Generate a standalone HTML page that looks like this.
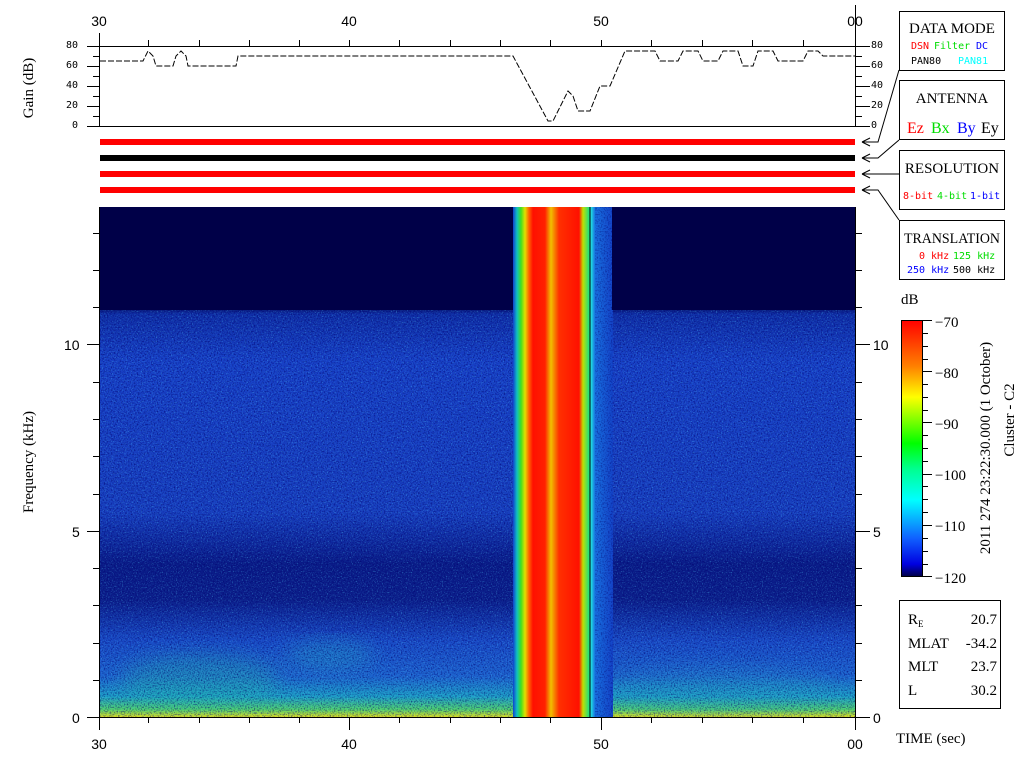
<!DOCTYPE html>
<html><head><meta charset="utf-8"><style>
html,body{margin:0;padding:0;background:#fff;width:1024px;height:768px;overflow:hidden}
svg{display:block}
.n{font-family:"Liberation Sans",sans-serif;font-size:14px;fill:#000}
.s{font-family:"DejaVu Sans Mono","Liberation Mono",monospace;font-size:10px}
.t{font-family:"Liberation Serif",serif;font-size:15px;fill:#000}
</style></head><body>
<svg width="1024" height="768" viewBox="0 0 1024 768" xmlns="http://www.w3.org/2000/svg">
<defs>
<linearGradient id="bg" x1="0" y1="207" x2="0" y2="717" gradientUnits="userSpaceOnUse">
<stop offset="0" stop-color="#000048"/>
<stop offset="0.19" stop-color="#000048"/>
<stop offset="0.21" stop-color="#1030a8"/>
<stop offset="0.3" stop-color="#1842c8"/>
<stop offset="0.6" stop-color="#1840c0"/>
<stop offset="0.7" stop-color="#0a1c88"/>
<stop offset="0.77" stop-color="#0c208c"/>
<stop offset="0.85" stop-color="#1a4cc8"/>
<stop offset="0.92" stop-color="#1e64d0"/>
<stop offset="0.96" stop-color="#1ea0c8"/>
<stop offset="0.985" stop-color="#50d070"/>
<stop offset="1" stop-color="#e0e020"/>
</linearGradient>
<linearGradient id="burst" x1="513" y1="0" x2="613" y2="0" gradientUnits="userSpaceOnUse">
<stop offset="0" stop-color="#1040d0"/>
<stop offset="0.04" stop-color="#10c0c0"/>
<stop offset="0.08" stop-color="#40e020"/>
<stop offset="0.12" stop-color="#e0e000"/>
<stop offset="0.16" stop-color="#ff6000"/>
<stop offset="0.2" stop-color="#ff1000"/>
<stop offset="0.32" stop-color="#ff2000"/>
<stop offset="0.38" stop-color="#f0c000"/>
<stop offset="0.46" stop-color="#ff3000"/>
<stop offset="0.66" stop-color="#ff1000"/>
<stop offset="0.7" stop-color="#c0e000"/>
<stop offset="0.76" stop-color="#20e080"/>
<stop offset="0.77" stop-color="#000"/>
<stop offset="0.78" stop-color="#20e0e0"/>
<stop offset="0.82" stop-color="#1870e0"/>
<stop offset="1" stop-color="#1444c8"/>
</linearGradient>
<linearGradient id="cb" x1="0" y1="320" x2="0" y2="577" gradientUnits="userSpaceOnUse">
<stop offset="0" stop-color="#ff0000"/>
<stop offset="0.18" stop-color="#ff8000"/>
<stop offset="0.3" stop-color="#ffff00"/>
<stop offset="0.48" stop-color="#00ff00"/>
<stop offset="0.58" stop-color="#00ff90"/>
<stop offset="0.7" stop-color="#00ffff"/>
<stop offset="0.85" stop-color="#1060ff"/>
<stop offset="0.95" stop-color="#0000e0"/>
<stop offset="1" stop-color="#000040"/>
</linearGradient>
<filter id="noise" x="0" y="0" width="100%" height="100%">
<feTurbulence type="fractalNoise" baseFrequency="0.7" numOctaves="1" seed="3"/>
<feColorMatrix type="matrix" values="0 0 0 0 0  0 0 0 0 0  0 0 0 0 0.15  0 0 0 -2.4 1.3"/>
</filter>
<filter id="noise2" x="0" y="0" width="100%" height="100%">
<feTurbulence type="fractalNoise" baseFrequency="0.8" numOctaves="1" seed="11"/>
<feColorMatrix type="matrix" values="0 0 0 0 0.1  0 0 0 0 0.7  0 0 0 0 1  0 0 0 2.6 -1.45"/>
</filter>
<filter id="blur"><feGaussianBlur stdDeviation="10"/></filter>
</defs>

<!-- spectrogram -->
<rect x="99" y="207" width="756" height="510" fill="url(#bg)"/>
<g filter="url(#blur)" opacity="0.35">
<ellipse cx="200" cy="680" rx="80" ry="25" fill="#20c0a0"/>
<ellipse cx="330" cy="655" rx="45" ry="15" fill="#20b0c0"/>
<ellipse cx="720" cy="690" rx="120" ry="20" fill="#20a0c0"/>
</g>
<rect x="99" y="310" width="756" height="407" filter="url(#noise)" opacity="0.75"/>
<rect x="99" y="310" width="756" height="407" filter="url(#noise2)" opacity="0.6"/>
<rect x="513" y="207" width="100" height="510" fill="url(#burst)"/>
<rect x="595" y="207" width="18" height="510" filter="url(#noise)" opacity="0.6"/>
<rect x="612" y="207" width="243" height="103" fill="#000048"/>
<rect x="99" y="207" width="414" height="103" fill="#000048"/>

<!-- gain plot -->
<g stroke="#000" fill="none" stroke-width="1">
<path d="M87 46.5H855.5 M99.5 33V126.5 M87 126.5H855.5 M855.5 5V126.5"/>
<path d="M87 46.5H99 M93 56.5H99 M87 66.5H99 M93 76.5H99 M87 86.5H99 M93 96.5H99 M87 106.5H99 M93 116.5H99 M87 126.5H99"/>
<path d="M855 46.5H870 M855 56.5H862 M855 66.5H870 M855 76.5H862 M855 86.5H870 M855 96.5H862 M855 106.5H870 M855 116.5H862 M855 126.5H870"/>
<path d="M148.5 40V46 M199.5 40V46 M249.5 40V46 M299.5 40V46 M349.5 40V46 M399.5 40V46 M450.5 40V46 M500.5 40V46 M550.5 40V46 M601.5 40V46 M651.5 40V46 M702.5 40V46 M752.5 40V46 M803.5 40V46"/>
<polyline stroke-dasharray="6 2" points="100,61 143,61 148,51 153,56 156,66 173,66 176,56 181,51 186,56 188,66 236,66 238,56 513,56 548,121 553,121 568,91 573,96 578,111 590,111 600,86 610,86 625,51 655,51 660,61 678,61 683,51 698,51 703,61 718,61 723,51 738,51 743,66 753,66 758,51 773,51 778,61 803,61 808,51 818,51 823,56 855,56"/>
</g>
<g style="font-family:'DejaVu Sans Mono',monospace;font-size:10px">
<text x="66" y="48">80</text><text x="66" y="68">60</text><text x="66" y="88">40</text><text x="66" y="108">20</text><text x="72" y="128">0</text>
<text x="871" y="48">80</text><text x="871" y="68">60</text><text x="871" y="88">40</text><text x="871" y="108">20</text><text x="871" y="128">0</text>
</g>
<text class="t" transform="translate(33,88) rotate(-90)" text-anchor="middle">Gain (dB)</text>

<!-- status lines -->
<rect x="100" y="139" width="755" height="6" fill="#ff0000"/>
<rect x="100" y="155" width="755" height="6" fill="#000"/>
<rect x="100" y="171" width="755" height="6" fill="#ff0000"/>
<rect x="100" y="187" width="755" height="6" fill="#ff0000"/>

<!-- arrows -->
<g stroke="#000" fill="none">
<path d="M899 70L878 142H862 M862 142L870 138 M862 142L870 146"/>
<path d="M899 140L878 158H862 M862 158L870 154 M862 158L870 162"/>
<path d="M899 174H862 M862 174L870 170 M862 174L870 178"/>
<path d="M899 220L878 190H862 M862 190L870 186 M862 190L870 194"/>
</g>

<!-- spectrogram axes -->
<g stroke="#000" fill="none">
<path d="M99.5 207V717.5 M99.5 717.5H855.5 M855.5 207V717.5"/>
<path d="M87 717.5H99 M93 680.5H99 M93 643.5H99 M93 605.5H99 M93 568.5H99 M87 531.5H99 M93 494.5H99 M93 456.5H99 M93 419.5H99 M93 382.5H99 M87 344.5H99 M93 307.5H99 M93 270.5H99 M93 233.5H99"/>
<path d="M855 717.5H870 M855 680.5H862 M855 643.5H862 M855 605.5H862 M855 568.5H862 M855 531.5H870 M855 494.5H862 M855 456.5H862 M855 419.5H862 M855 382.5H862 M855 344.5H870 M855 307.5H862 M855 270.5H862 M855 233.5H862"/>
<path d="M99.5 717V730 M148.5 717V723 M199.5 717V723 M249.5 717V723 M299.5 717V723 M349.5 717V730 M399.5 717V723 M450.5 717V723 M500.5 717V723 M550.5 717V723 M601.5 717V730 M651.5 717V723 M702.5 717V723 M752.5 717V723 M803.5 717V723 M855.5 717V730"/>
</g>
<g class="n" text-anchor="middle">
<text x="99" y="26">30</text><text x="349" y="26">40</text><text x="601" y="26">50</text><text x="855" y="26">00</text>
<text x="99" y="749">30</text><text x="349" y="749">40</text><text x="601" y="749">50</text><text x="855" y="749">00</text>
</g>
<g class="n">
<text x="64" y="350">10</text><text x="72" y="537">5</text><text x="72" y="723">0</text>
<text x="873" y="350">10</text><text x="873" y="537">5</text><text x="873" y="723">0</text>
</g>
<text class="t" transform="translate(33,462) rotate(-90)" text-anchor="middle">Frequency (kHz)</text>

<!-- right boxes -->
<g stroke="#000" fill="#fff">
<rect x="899.5" y="11.5" width="105" height="59"/>
<rect x="899.5" y="80.5" width="105" height="59"/>
<rect x="899.5" y="150.5" width="105" height="59"/>
<rect x="899.5" y="220.5" width="105" height="59"/>
<rect x="899.5" y="600.5" width="101" height="108"/>
</g>
<g class="t" text-anchor="middle" style="font-size:15px">
<text x="952" y="33">DATA MODE</text>
<text x="952" y="103">ANTENNA</text>
<text x="952" y="173">RESOLUTION</text>
<text x="952" y="243" textLength="96" lengthAdjust="spacingAndGlyphs">TRANSLATION</text>
</g>
<g class="s">
<text x="911" y="49" fill="#ff0000">DSN</text><text x="934" y="49" fill="#00dd00">Filter</text><text x="976" y="49" fill="#0000ff">DC</text>
<text x="911" y="64" fill="#000">PAN80</text><text x="958" y="64" fill="#00ffff">PAN81</text>
<text x="903" y="199" fill="#ff0000">8-bit</text><text x="937" y="199" fill="#00dd00">4-bit</text><text x="970" y="199" fill="#0000ff">1-bit</text>
<text x="919" y="259" fill="#ff0000">0 kHz</text><text x="953" y="259" fill="#00dd00">125 kHz</text>
<text x="907" y="273" fill="#0000ff">250 kHz</text><text x="953" y="273" fill="#000">500 kHz</text>
</g>
<g style="font-family:'Liberation Serif',serif;font-size:16px">
<text x="907" y="133" fill="#ff0000">Ez</text><text x="931" y="133" fill="#00dd00">Bx</text><text x="957" y="133" fill="#0000ff">By</text><text x="981" y="133" fill="#000">Ey</text>
</g>

<!-- colorbar -->
<text class="t" x="901" y="304">dB</text>
<rect x="901.5" y="320.5" width="21" height="256" fill="url(#cb)" stroke="#000"/>
<g stroke="#000"><path d="M922 320.5H932 M922 333.5H928 M922 346.5H928 M922 359.5H928 M922 371.5H932 M922 384.5H928 M922 397.5H928 M922 410.5H928 M922 422.5H932 M922 435.5H928 M922 448.5H928 M922 461.5H928 M922 474.5H932 M922 486.5H928 M922 499.5H928 M922 512.5H928 M922 525.5H932 M922 538.5H928 M922 551.5H928 M922 564.5H928 M922 576.5H932"/></g>
<g class="t">
<text x="935" y="327">−70</text><text x="935" y="378">−80</text><text x="935" y="429">−90</text><text x="935" y="480">−100</text><text x="935" y="531">−110</text><text x="935" y="583">−120</text>
</g>
<text class="t" transform="translate(990,448) rotate(-90)" text-anchor="middle">2011 274 23:22:30.000 (1 October)</text>
<text class="t" transform="translate(1014,420) rotate(-90)" text-anchor="middle">Cluster - C2</text>

<!-- info box -->
<g class="t">
<text x="908" y="624">R<tspan font-size="9" dy="3">E</tspan></text><text x="997" y="624" text-anchor="end">20.7</text>
<text x="908" y="648">MLAT</text><text x="997" y="648" text-anchor="end">-34.2</text>
<text x="908" y="671">MLT</text><text x="997" y="671" text-anchor="end">23.7</text>
<text x="908" y="695">L</text><text x="997" y="695" text-anchor="end">30.2</text>
<text x="896" y="743">TIME (sec)</text>
</g>
</svg>
</body></html>
